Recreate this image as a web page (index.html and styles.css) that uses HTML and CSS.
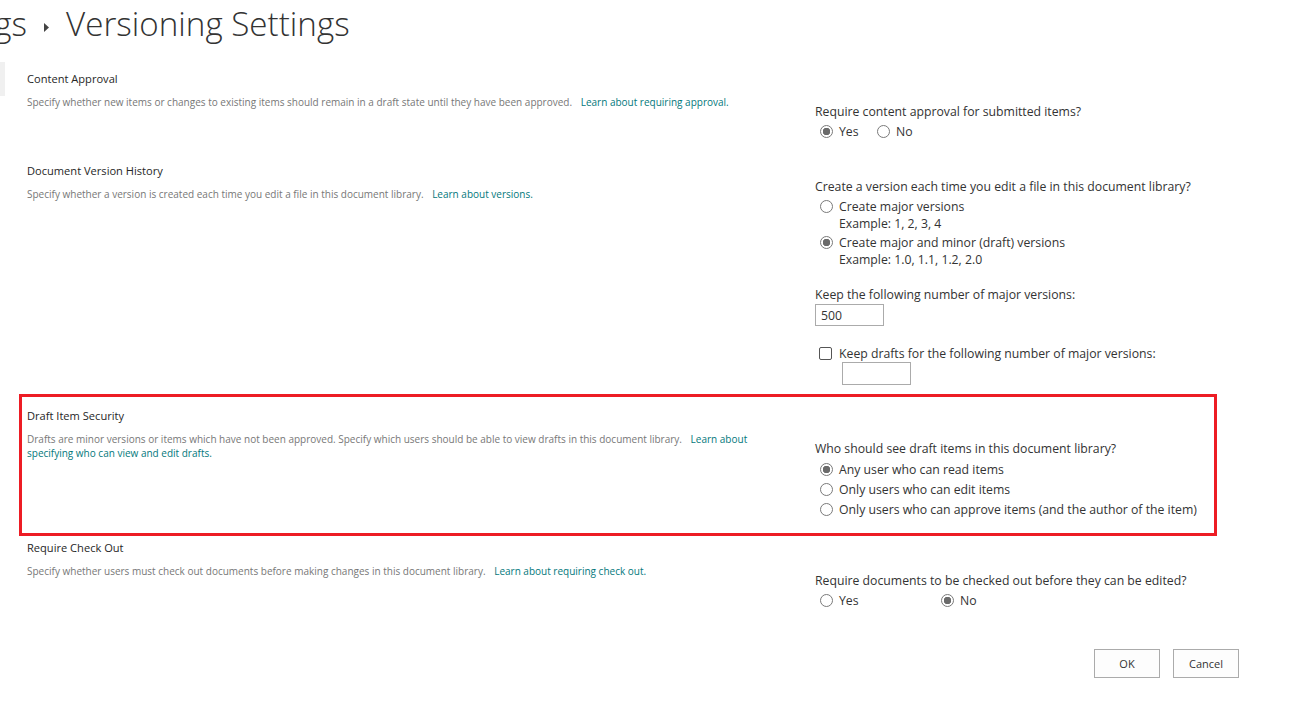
FILE: index.html
```html
<!DOCTYPE html>
<html lang="en">
<head>
    <meta charset="UTF-8">
    <meta name="viewport" content="width=device-width, initial-scale=1.0">
    <title>Versioning Settings</title>
    <link rel="stylesheet" href="styles.css">
</head>
<body>
    <div class="nav-edge"></div>
    <h1 class="page-title">
        <span class="crumb-cut">Settings</span>
        <svg class="crumb-arrow" width="6" height="9" viewBox="0 0 6 9"><path d="M0 0 L5 4.5 L0 9 Z" fill="#444"/></svg>
        <span>Versioning Settings</span>
    </h1>

    <div class="sections">
        <!-- content approval -->
        <div class="section s-approval">
            <div class="section-info">
                <h3>Content Approval</h3>
                <p>Specify whether new items or changes to existing items should remain in a draft state until they have been approved. <a href="#">Learn about requiring approval.</a></p>
            </div>
            <div class="section-field">
                <div class="question">Require content approval for submitted items?</div>
                <div class="inline-radios">
                    <label class="radio yes-short"><input type="radio" name="approval" checked>Yes</label>
                    <label class="radio"><input type="radio" name="approval">No</label>
                </div>
            </div>
        </div>

        <!-- version history -->
        <div class="section s-history">
            <div class="section-info">
                <h3>Document Version History</h3>
                <p>Specify whether a version is created each time you edit a file in this document library. <a href="#">Learn about versions.</a></p>
            </div>
            <div class="section-field">
                <div class="question">Create a version each time you edit a file in this document library?</div>
                <label class="radio"><input type="radio" name="versions">Create major versions</label>
                <div class="example">Example: 1, 2, 3, 4</div>
                <label class="radio"><input type="radio" name="versions" checked>Create major and minor (draft) versions</label>
                <div class="example">Example: 1.0, 1.1, 1.2, 2.0</div>

                <div class="keep-label">Keep the following number of major versions:</div>
                <input class="num-input" type="text" value="500">

                <label class="check"><input type="checkbox">Keep drafts for the following number of major versions:</label>
                <input class="num-input indented" type="text" value="">
            </div>
        </div>

        <!-- draft item security -->
        <div class="section s-drafts highlight">
            <div class="section-info">
                <h3>Draft Item Security</h3>
                <p>Drafts are minor versions or items which have not been approved. Specify which users should be able to view drafts in this document library. <a href="#">Learn about specifying who can view and edit drafts.</a></p>
            </div>
            <div class="section-field">
                <div class="question">Who should see draft items in this document library?</div>
                <label class="radio tall"><input type="radio" name="drafts" checked>Any user who can read items</label>
                <label class="radio tall"><input type="radio" name="drafts">Only users who can edit items</label>
                <label class="radio tall"><input type="radio" name="drafts">Only users who can approve items (and the author of the item)</label>
            </div>
        </div>

        <!-- check out -->
        <div class="section s-checkout">
            <div class="section-info">
                <h3>Require Check Out</h3>
                <p>Specify whether users must check out documents before making changes in this document library. <a href="#">Learn about requiring check out.</a></p>
            </div>
            <div class="section-field">
                <div class="question">Require documents to be checked out before they can be edited?</div>
                <div class="inline-radios">
                    <label class="radio yes-long"><input type="radio" name="checkout">Yes</label>
                    <label class="radio"><input type="radio" name="checkout" checked>No</label>
                </div>
            </div>
        </div>
    </div>

    <div class="actions">
        <button>OK</button>
        <button>Cancel</button>
    </div>
</body>
</html>
```

FILE: styles.css
```css
body {
    margin: 0;
    font-family: "Open Sans", "Noto Sans", sans-serif;
    color: #333;
    background: #fff;
    overflow: hidden;
}
.nav-edge {
    position: absolute;
    left: 0;
    top: 62px;
    width: 5px;
    height: 34px;
    background: #f0f0f0;
}
.page-title {
    display: flex;
    align-items: center;
    margin: 0;
    height: 48px;
    line-height: 48px;
    font-size: 33.2px;
    font-weight: 300;
    color: #333;
}
.crumb-cut {
    display: block;
    width: 27px;
    overflow: hidden;
    direction: rtl;
    white-space: nowrap;
}
.crumb-arrow {
    margin: 7px 16px 0 17px;
}

.sections {
    margin: 21px 0 0 19px;
    width: 1198px;
}
.section {
    display: grid;
    grid-template-columns: 788px 1fr;
    padding-left: 8px;
}
.section.highlight {
    border: 3px solid #ed1c24;
    padding-left: 5px;
}
.section-info h3 {
    margin: 0;
    font-size: 11.1px;
    font-weight: 400;
    line-height: 20px;
    color: #262626;
}
.section-info p {
    margin: 6px 0 0;
    max-width: 735px;
    font-size: 10px;
    line-height: 14px;
    color: #777;
}
.section-info a {
    color: #03787c;
    text-decoration: none;
    margin-left: 6px;
}

.s-approval { padding-bottom: 21px; }
.s-approval .section-field { padding-top: 33px; }
.s-history { padding-bottom: 9px; }
.s-history .section-field { padding-top: 16px; }
.s-drafts { padding-top: 9px; padding-bottom: 14px; }
.s-drafts .section-field { padding-top: 33px; }
.s-checkout { padding-top: 2px; }
.s-checkout .section-field { padding-top: 33px; }

.question {
    font-size: 12.25px;
    line-height: 20px;
    color: #333;
}
.radio, .check {
    display: flex;
    align-items: center;
    height: 18px;
    font-size: 12.25px;
    color: #333;
}
.radio {
    padding-left: 5px;
}
.radio.tall {
    height: 20px;
}
.inline-radios {
    display: flex;
}
.yes-short { width: 57px; box-sizing: border-box; }
.yes-long { width: 121px; box-sizing: border-box; }

.radio input {
    appearance: none;
    box-sizing: border-box;
    width: 13px;
    height: 13px;
    margin: 0 6px 0 0;
    border: 1px solid #7a7a7a;
    border-radius: 50%;
    background: #fff;
}
.radio input:checked {
    background: radial-gradient(circle, #6b6b6b 0 3.5px, #fff 4px);
}
.example {
    padding-left: 24px;
    line-height: 18px;
    font-size: 12.25px;
}
.keep-label {
    margin-top: 17px;
    line-height: 18px;
    font-size: 12.25px;
}
.num-input {
    display: block;
    box-sizing: border-box;
    width: 69px;
    height: 22px;
    margin: 0;
    padding: 0 5px;
    border: 1px solid #ababab;
    font-family: inherit;
    font-size: 12.25px;
    color: #333;
}
.num-input.indented {
    margin-left: 27px;
    height: 23px;
}
.check {
    margin-top: 18px;
}
.check input {
    appearance: none;
    box-sizing: border-box;
    width: 13px;
    height: 13px;
    margin: 0 7px 0 4px;
    border: 1px solid #555;
    border-radius: 2px;
    background: #fff;
}

.actions {
    display: flex;
    justify-content: flex-end;
    gap: 13px;
    width: 1239px;
    margin-top: 40px;
}
.actions button {
    width: 66px;
    height: 29px;
    border: 1px solid #ababab;
    background: #fdfdfd;
    font-family: inherit;
    font-size: 11px;
    color: #333;
}
```
